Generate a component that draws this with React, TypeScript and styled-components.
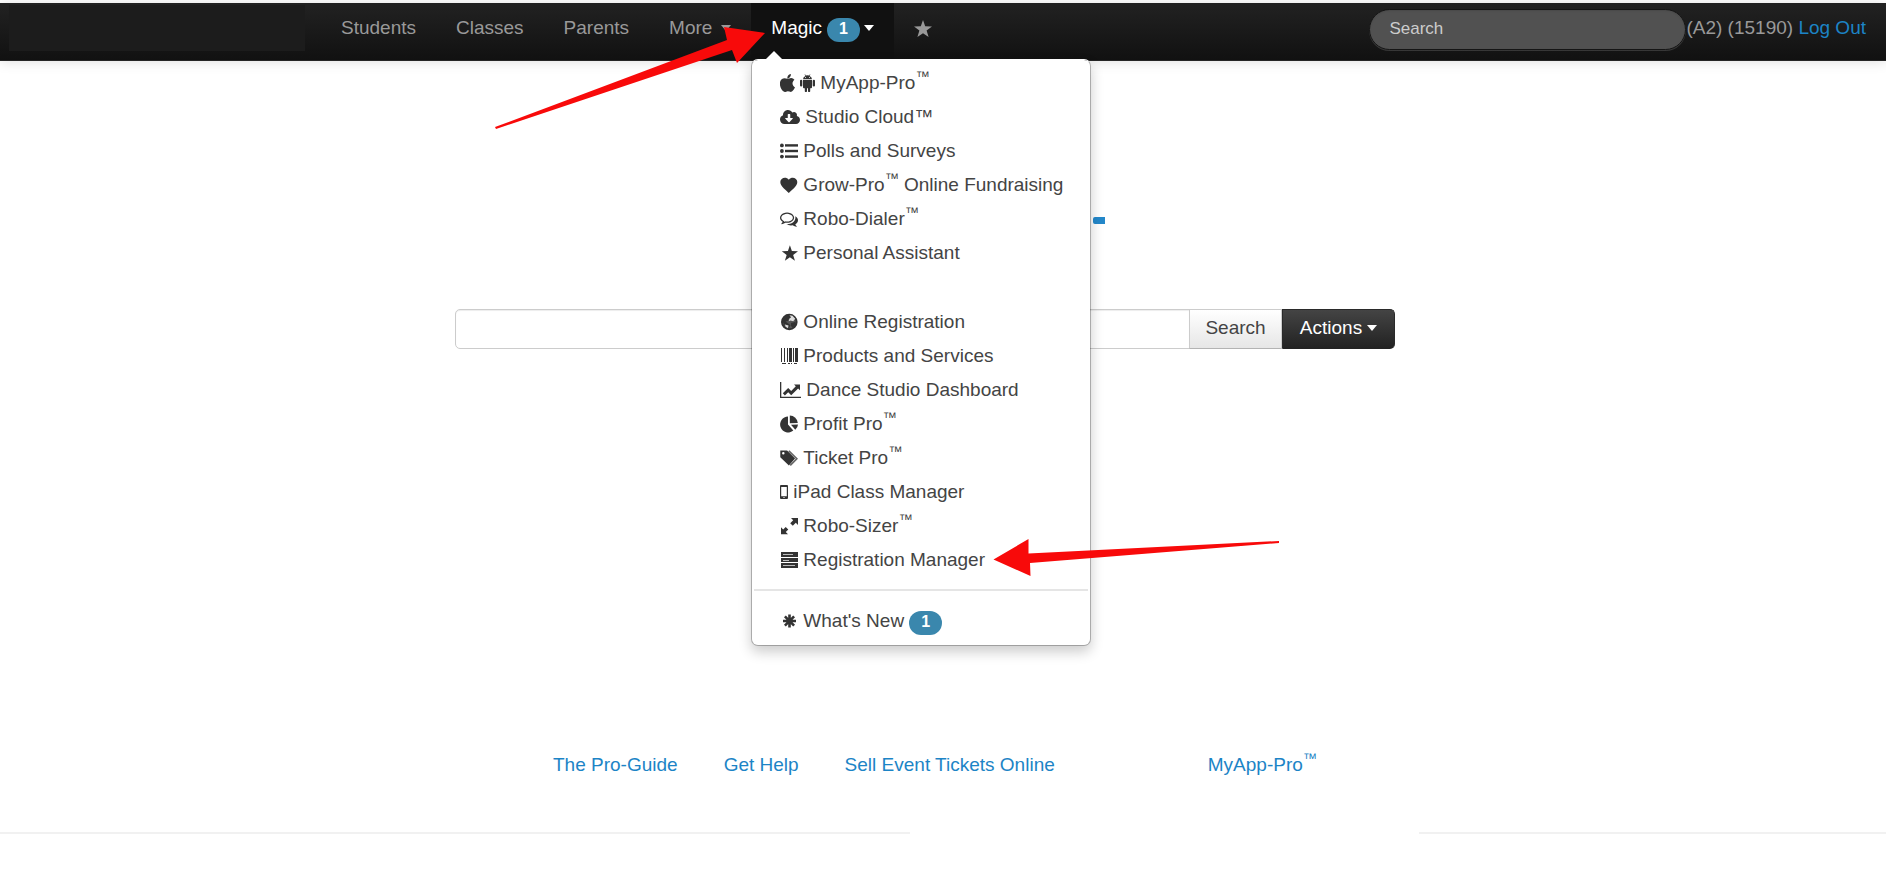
import React from "react";
import styled, { createGlobalStyle } from "styled-components";
import { FaCloudDownloadAlt } from "react-icons/fa";

const GlobalStyle = createGlobalStyle`
  *, *::before, *::after { box-sizing: border-box; }
  body {
    margin: 0;
    background: #fff;
    color: #444;
    font: 19px/34px "Liberation Sans", Arial, sans-serif;
  }
  a { color: #1c84c6; text-decoration: none; }
  ul { list-style: none; margin: 0; padding: 0; }
`;

const Page = styled.div`
  padding-top: 3px;
`;

const Header = styled.header`
  position: relative;
  z-index: 1;
  display: flex;
  justify-content: space-between;
  min-height: 58px;
  padding-right: 20px;
  background: linear-gradient(#222, #111);
  border-bottom: 1px solid #252525;
  box-shadow: 0 1px 12px rgba(0, 0, 0, 0.13);
  color: #999;
`;

const HeaderGroup = styled.div`
  display: flex;
`;

const Brand = styled.div`
  width: 296px;
  height: 46px;
  margin: 2px 16px 0 9px;
  background: #1c1c1c;
`;

const NavList = styled.ul`
  display: flex;
`;

const NavItem = styled.li<{ $open?: boolean }>`
  position: relative;
  background: ${(p) => (p.$open ? "#111" : "transparent")};
`;

const NavLink = styled.a<{ $open?: boolean }>`
  display: flex;
  align-items: center;
  height: 50px;
  padding: 0 20px;
  color: ${(p) => (p.$open ? "#fff" : "#999")};
  line-height: 50px;
`;

const Caret = styled.span<{ $gap: number }>`
  margin-left: ${(p) => p.$gap}px;
  border: 5px solid transparent;
  border-top: 6px solid currentColor;
  border-bottom: 0;
`;

const Badge = styled.span<{ $gap?: number }>`
  width: 33px;
  height: 24px;
  margin: 3px 0 0 ${(p) => p.$gap ?? 0}px;
  border-radius: 12px;
  background: #3a87ad;
  color: #fff;
  font-size: 16px;
  font-weight: bold;
  line-height: 21px;
  text-align: center;
`;

const Account = styled.div`
  display: flex;
  align-items: flex-start;
  line-height: 50px;
`;

const AccountText = styled.span`
  white-space: pre;
`;

const NavSearch = styled.input`
  width: 317px;
  height: 41px;
  margin-top: 6px;
  padding: 0 19px 2px;
  border: 1px solid #151515;
  border-radius: 21px;
  background: #515151;
  box-shadow: inset 0 1px 2px rgba(0, 0, 0, 0.1), 0 1px 0 rgba(255, 255, 255, 0.15);
  font: 17px "Liberation Sans", Arial, sans-serif;
  &::placeholder { color: #ccc; opacity: 1; }
`;

const Menu = styled.ul`
  position: absolute;
  top: 56px;
  left: 0;
  width: 340px;
  padding: 6px 0 7px;
  background: #fff;
  background-clip: padding-box;
  border: 1px solid rgba(0, 0, 0, 0.25);
  border-top-color: #fff;
  border-radius: 7px;
  box-shadow: 0 6px 13px rgba(0, 0, 0, 0.2);
  &::before {
    content: "";
    position: absolute;
    top: -9px;
    left: 14px;
    border: 8px solid transparent;
    border-bottom-color: #fff;
    border-top: 0;
  }
`;

const MenuItem = styled.li`
  position: relative;
  min-height: 34px;
`;

const MenuSpace = styled.li`
  height: 35px;
`;

const MenuLink = styled.a`
  display: flex;
  align-items: center;
  gap: 5px;
  height: 34px;
  padding-left: 28px;
  color: #444;
  white-space: nowrap;
`;

const Divider = styled.li`
  height: 2px;
  margin: 12px 2px 13px;
  background: #e5e5e5;
`;

const Sup = styled.sup`
  font-size: 14px;
  line-height: 0;
  vertical-align: 8px;
`;

const Arrow = styled.svg<{ $x: number; $y: number }>`
  position: absolute;
  left: ${(p) => p.$x}px;
  top: ${(p) => p.$y}px;
  z-index: 2;
  pointer-events: none;
`;

const Glyph = styled.svg`
  flex: none;
  fill: #333;
  color: #333;
`;

const Main = styled.main`
  max-width: 976px;
  margin: 0 auto;
  padding: 156px 36px 0 0;
`;

const Dash = styled.div`
  width: 12px;
  height: 7px;
  margin-left: 638px;
  border-radius: 2px 0 0 2px;
  background: #2488ca;
`;

const SearchForm = styled.form`
  display: flex;
  height: 40px;
  margin-top: 85px;
`;

const SearchBox = styled.input`
  flex: 1;
  min-width: 0;
  padding: 0 10px;
  border: 1px solid #ccc;
  border-radius: 5px 0 0 5px;
  background: #fff;
  box-shadow: inset 0 1px 1px rgba(0, 0, 0, 0.075);
  font: inherit;
`;

const FormButton = styled.button<{ $dark?: boolean }>`
  display: flex;
  align-items: center;
  justify-content: center;
  width: ${(p) => (p.$dark ? 113 : 93)}px;
  margin-left: ${(p) => (p.$dark ? 0 : -1)}px;
  padding: 0 0 3px;
  border: 1px solid ${(p) => (p.$dark ? "#2a2a2a" : "#ccc")};
  border-bottom-color: ${(p) => (p.$dark ? "#222" : "#b3b3b3")};
  border-radius: ${(p) => (p.$dark ? "0 5px 5px 0" : "0")};
  background: ${(p) => (p.$dark ? "linear-gradient(#444, #222)" : "linear-gradient(#fff, #e6e6e6)")};
  color: ${(p) => (p.$dark ? "#fff" : "#444")};
  font: 19px "Liberation Sans", Arial, sans-serif;
`;

const Links = styled.nav`
  display: flex;
  gap: 46px;
  margin: 399px 0 0 98px;
  white-space: nowrap;
`;

const LinkGap = styled.span`
  width: 61px;
`;

const Rules = styled.div`
  display: grid;
  grid-template-columns: 913fr 468fr;
  column-gap: 27%;
  margin-top: 50px;
`;

const Rule = styled.hr`
  width: 100%;
  height: 2px;
  margin: 0;
  border: 0;
  background: #f1f1f1;
`;

const TM = () => <Sup>™</Sup>;

const starPath = "M9 0 L11.2 6.3 L18 6.5 L12.6 10.6 L14.6 17 L9 13.2 L3.4 17 L5.4 10.6 L0 6.5 L6.8 6.3 Z";

const icons = {
  apple: (
    <Glyph width="15" height="18" viewBox="207 0 1378 1664">
      <path d="M1585 1215q-39 125-123 250-129 196-257 196-49 0-140-32-86-32-151-32-61 0-142 33-81 34-132 34-152 0-301-259-147-261-147-503 0-228 113-374 113-144 284-144 72 0 177 30 104 30 138 30 45 0 143-34 102-34 173-34 119 0 213 65 52 36 104 100-79 67-114 118-65 94-65 207 0 124 69 223t158 126zm-376-1173q0 61-29 136-30 75-93 138-54 54-108 72-37 11-104 17 3-149 78-257 74-107 250-148 1 3 2.500 11t2.500 11q0 4 .5 10t.5 10z" />
    </Glyph>
  ),
  android: (
    <Glyph width="15" height="18" viewBox="0 0 15 18">
      <path d="M3 5.2a4.6 4 0 0 1 2.4-3.3L4.6.5l.4-.3.9 1.4a5 5 0 0 1 3.2 0L10 .2l.4.3-.8 1.4A4.6 4 0 0 1 12 5.2zM5.5 3.1a.5.5 0 1 0 0 1 .5.5 0 0 0 0-1zm4 0a.5.5 0 1 0 0 1 .5.5 0 0 0 0-1z" fillRule="evenodd" />
      <path d="M3 6h9v7.2a1 1 0 0 1-1 1h-.8V17a1.1 1.1 0 0 1-2.2 0v-2.8H7V17a1.1 1.1 0 0 1-2.2 0v-2.8H4a1 1 0 0 1-1-1z" />
      <rect x="0" y="5.8" width="2.3" height="6.7" rx="1.1" />
      <rect x="12.7" y="5.8" width="2.3" height="6.7" rx="1.1" />
    </Glyph>
  ),
  cloud: <Glyph as={FaCloudDownloadAlt} size={20} />,
  list: (
    <Glyph width="18" height="16" viewBox="0 0 18 16">
      <circle cx="1.9" cy="2.4" r="1.9" />
      <circle cx="1.9" cy="8" r="1.9" />
      <circle cx="1.9" cy="13.6" r="1.9" />
      <rect x="5" y="1.2" width="13" height="2.4" />
      <rect x="5" y="6.8" width="13" height="2.4" />
      <rect x="5" y="12.4" width="13" height="2.4" />
    </Glyph>
  ),
  heart: (
    <Glyph width="18" height="16" viewBox="0 0 18 16">
      <path d="M8.8 16C6.4 13 .3 9.6.3 4.9.3 1 5.9-1 8.8 2.7 11.7-1 17.3 1 17.3 4.9c0 4.7-6.1 8.1-8.5 11.1z" />
    </Glyph>
  ),
  comments: (
    <Glyph width="18" height="18" viewBox="0 0 1792 1792">
      <path d="M704 384q-153 0-286 52t-211.500 141-78.500 191q0 82 53 158t149 132l97 56-35 84q34-20 62-39l44-31 53 10q78 14 153 14 153 0 286-52t211.500-141 78.500-191-78.500-191-211.500-141-286-52zm0-128q191 0 353.500 68.500t256.500 186.500 94 257-94 257-256.500 186.500-353.500 68.500q-86 0-176-16-124 88-278 128-36 9-86 16h-3q-11 0-20.500-8t-11.500-21q-1-3-1-6.500t.5-6.500 2-6l2.500-5 3.500-5.500 4-5 4.500-5 4-4.500q5-6 23-25t26-29.500 22.500-29 25-38.500 20.500-44q-124-72-195-177t-71-224q0-139 94-257t256.500-186.500 353.500-68.500zm822 1169q10 24 20.500 44t25 38.500 22.500 29 26 29.500 23 25q1 1 4 4.500t4.500 5 4 5 3.500 5.500l2.500 5 2 6 .5 6.500-1 6.500q-3 14-13 22t-22 7q-50-7-86-16-154-40-278-128-90 16-176 16-271 0-472-132 58 4 88 4 161 0 309-45t264-129q125-92 192-212t67-254q0-77-23-152 129 71 204 178t75 230q0 120-71 224.500t-195 176.500z" />
    </Glyph>
  ),
  star: (
    <Glyph width="18" height="16" viewBox="-2 0 20 17">
      <path d={starPath} />
    </Glyph>
  ),
  globe: (
    <Glyph width="18" height="18" viewBox="0 0 18 18">
      <circle cx="9.3" cy="9" r="7.3" fill="#555" stroke="#333" strokeWidth="2" />
      <path d="M2.2 8.500C3 4.500 6 2 8.500 2L11 4.200 9 5.800 7.700 8 5.500 8.600 8.500 10.700 10.500 12 8.500 16.200 5.200 14.500 4.500 11.500z" fill="#333" />
      <path d="M9.500 2.200l3 .5 2.700 3.100-2 2.500-2.700-.8-1.800.7.700-2.400 1.700-1.500z M5 11.500l3.500 1-.5 2.700-2.500-1.500z" fill="#ddd" />
      <path d="M11 10l4-1 .8 1.500-2.800 4.500-2-2z" fill="#333" />
    </Glyph>
  ),
  barcode: (
    <Glyph width="18" height="18" viewBox="0 0 18 18">
      <path d="M1 1h1v14H1zM4 1h1v14H4zM7 1h1v14H7zM9 1h3v14H9zM13 1h1v14h-1zM15 1h3v14h-3zM2 16h4v1H2zM8 16h2v1H8zM11 16h1v1h-1zM14 16h3v1h-3z" />
    </Glyph>
  ),
  chart: (
    <Glyph width="21" height="18" viewBox="0 0 21 18">
      <path d="M0 1h1.300v14.700H21V17H0z" />
      <path d="M2.800 12.300L8.200 6.900l3 3 4.600-4.600L14 3.500h6v5.700l-1.900-1.800-6.900 6.900-3-3-3.300 3.300z" />
    </Glyph>
  ),
  pie: (
    <Glyph width="18" height="18" viewBox="0 0 18 18">
      <path d="M8 1.500V9.400l5.300 6.200A8 8 0 1 1 8 1.500z" />
      <path d="M9.800.6a8 8 0 0 1 8 7.400l-8 .3z" />
      <path d="M11 9.700l7-.3a8 8 0 0 1-2.700 5.300z" />
    </Glyph>
  ),
  tags: (
    <Glyph width="18" height="18" viewBox="0 0 19 18">
      <path d="M.3 1h7.200L15.900 9.600 9.400 17 .3 8.100zm3.200 1.700a1.300 1.300 0 1 0 0 2.600 1.300 1.300 0 0 0 0-2.600z" fillRule="evenodd" />
      <path d="M9.300 1.500l8.500 8.300-7 7" fill="none" stroke="#666" strokeWidth="1.800" />
    </Glyph>
  ),
  phone: (
    <Glyph width="8" height="14" viewBox="0 0 8 14">
      <path d="M1 0h6a1 1 0 0 1 1 1v12a1 1 0 0 1-1 1H1a1 1 0 0 1-1-1V1a1 1 0 0 1 1-1zm.2 2v9.300h5.600V2zM3.300 12.200v.9h1.400v-.9z" fillRule="evenodd" />
    </Glyph>
  ),
  resize: (
    <Glyph width="18" height="18" viewBox="0 0 18 18">
      <path d="M11 1h7v7l-2.200-2.200-3 3-2.600-2.600 3-3zM1 17.300v-7l2.200 2.200 2.500-2.500 2.600 2.600-2.500 2.500L8 17.300z" />
    </Glyph>
  ),
  tasks: (
    <Glyph width="18" height="16" viewBox="0 0 18 16">
      <rect x="1" y="0" width="17" height="5" />
      <rect x="1" y="6" width="17" height="4" />
      <rect x="1" y="11" width="17" height="5" />
      <path d="M3 2h10v1H3zM3 8h6v1H3zM3 13h12v1H3z" fill="#bbb" />
    </Glyph>
  ),
  asterisk: (
    <Glyph width="18" height="18" viewBox="0 0 18 18">
      <path d="M9.500 2.500v13M3 9h13M4.900 4.400l9.200 9.200M14.100 4.400l-9.200 9.200" stroke="#333" strokeWidth="2.600" />
    </Glyph>
  ),
};

type Entry = { icon: React.ReactNode; label: React.ReactNode; pointed?: boolean };

const tools: Entry[] = [
  { icon: <>{icons.apple}{icons.android}</>, label: <>MyApp-Pro<TM /></> },
  { icon: icons.cloud, label: "Studio Cloud™" },
  { icon: icons.list, label: "Polls and Surveys" },
  { icon: icons.heart, label: <>Grow-Pro<TM /> Online Fundraising</> },
  { icon: icons.comments, label: <>Robo-Dialer<TM /></> },
  { icon: icons.star, label: "Personal Assistant" },
];

const products: Entry[] = [
  { icon: icons.globe, label: "Online Registration" },
  { icon: icons.barcode, label: "Products and Services" },
  { icon: icons.chart, label: "Dance Studio Dashboard" },
  { icon: icons.pie, label: <>Profit Pro<TM /></> },
  { icon: icons.tags, label: <>Ticket Pro<TM /></> },
  { icon: icons.phone, label: "iPad Class Manager" },
  { icon: icons.resize, label: <>Robo-Sizer<TM /></> },
  { icon: icons.tasks, label: "Registration Manager", pointed: true },
];

const Entries = ({ items }: { items: Entry[] }) => (
  <>
    {items.map((item, i) => (
      <MenuItem key={i}>
        <MenuLink href="#">
          {item.icon}
          <span>{item.label}</span>
        </MenuLink>
        {item.pointed && (
          <Arrow $x={241} $y={-5} width="288" height="40" viewBox="0 0 288 40" aria-hidden="true">
            <path d="M.5 21.500L35.500 1v14.500L286 3v2L37 25l.5 13z" fill="#f80a0a" />
          </Arrow>
        )}
      </MenuItem>
    ))}
  </>
);

export default function App() {
  return (
    <Page>
      <GlobalStyle />
      <Header>
        <HeaderGroup>
          <Brand />
          <NavList>
            <NavItem><NavLink href="#">Students</NavLink></NavItem>
            <NavItem><NavLink href="#">Classes</NavLink></NavItem>
            <NavItem><NavLink href="#">Parents</NavLink></NavItem>
            <NavItem><NavLink href="#">More<Caret $gap={9} /></NavLink></NavItem>
            <NavItem $open>
              <NavLink href="#" $open>
                Magic<Badge $gap={5}>1</Badge><Caret $gap={4} />
              </NavLink>
              <Menu>
                <Entries items={tools} />
                <MenuSpace role="separator" />
                <Entries items={products} />
                <Divider role="separator" />
                <MenuItem>
                  <MenuLink href="#">
                    {icons.asterisk}
                    <span>What's New</span>
                    <Badge>1</Badge>
                  </MenuLink>
                </MenuItem>
              </Menu>
              <Arrow $x={-256} $y={23} width="271" height="104" viewBox="0 0 271 104" aria-hidden="true">
                <path d="M0 101L232 14 229 1 270 7 242 37 237 24 1 103z" fill="#f80a0a" />
              </Arrow>
            </NavItem>
            <NavItem>
              <NavLink href="#" aria-label="Favorites">
                <svg width="18" height="17" viewBox="0 0 18 17" fill="#999"><path d={starPath} /></svg>
              </NavLink>
            </NavItem>
          </NavList>
        </HeaderGroup>
        <Account>
          <NavSearch type="search" aria-label="Search" placeholder="Search" />
          <AccountText>(A2) (15190) <a href="#">Log Out</a></AccountText>
        </Account>
      </Header>
      <Main>
        <Dash />
        <SearchForm onSubmit={(e) => e.preventDefault()}>
          <SearchBox type="text" aria-label="Search records" />
          <FormButton type="submit">Search</FormButton>
          <FormButton type="button" $dark>Actions<Caret $gap={5} /></FormButton>
        </SearchForm>
        <Links>
          <a href="#">The Pro-Guide</a>
          <a href="#">Get Help</a>
          <a href="#">Sell Event Tickets Online</a>
          <LinkGap />
          <a href="#">MyApp-Pro<TM /></a>
        </Links>
      </Main>
      <Rules>
        <Rule />
        <Rule />
      </Rules>
    </Page>
  );
}
